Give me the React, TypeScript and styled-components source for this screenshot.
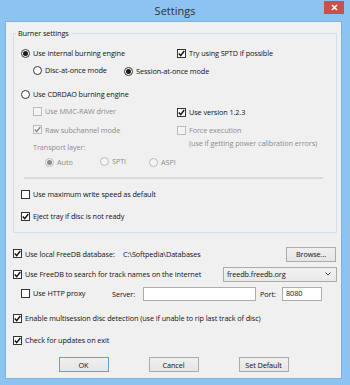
import React from "react";
import styled, { createGlobalStyle } from "styled-components";

const GlobalStyle = createGlobalStyle`
  html, body {
    margin: 0;
    padding: 0;
    background: #8cc3f1;
  }
  body {
    font-family: "Open Sans", "Noto Sans", "Liberation Sans", sans-serif;
  }
`;

const Window = styled.div`
  width: 350px;
  height: 385px;
  background: #8cc3f1;
  display: flex;
  flex-direction: column;
  overflow: hidden;
`;

const TitleBar = styled.div`
  height: 21px;
  flex: none;
  display: grid;
  grid-template-columns: 1fr auto 1fr;
  align-items: center;
`;

const Title = styled.div`
  grid-column: 2;
  font-size: 11px;
  color: #303030;
`;

const CloseButton = styled.div`
  grid-column: 3;
  justify-self: end;
  align-self: start;
  margin: 1px 6px 0 0;
  width: 20px;
  height: 13px;
  background: #c75050;
  display: flex;
  align-items: center;
  justify-content: center;
`;

const Client = styled.div`
  flex: 1;
  margin: 0 8px 6px 5px;
  background: #f0f0f0;
  border: 1px solid #7fb3df;
  padding: 5px 4px 0 7px;
  font-size: 7.3px;
  letter-spacing: -0.1px;
  line-height: 12px;
  color: #111;
`;

const GroupBox = styled.fieldset`
  margin: 0;
  min-width: 0;
  border: 1px solid #d5dfe5;
  padding: 8px 0 10px 7px;
`;

const Legend = styled.legend`
  padding: 0 2px;
  margin-left: -5px;
  line-height: 12px;
`;

const Row = styled.div<{ $mt?: number; $indent?: number; $h?: number; $top?: boolean }>`
  display: flex;
  align-items: ${(p) => (p.$top ? "flex-start" : "center")};
  height: ${(p) => p.$h ?? 12}px;
  margin-top: ${(p) => p.$mt ?? 0}px;
  padding-left: ${(p) => p.$indent ?? 0}px;
  white-space: nowrap;
`;

const Cell = styled.div<{ $w?: number; $mt?: number; $ml?: number }>`
  flex: none;
  width: ${(p) => (p.$w ? `${p.$w}px` : "auto")};
  margin-top: ${(p) => p.$mt ?? 0}px;
  margin-left: ${(p) => p.$ml ?? 0}px;
`;

const Label = styled.span<{ $disabled?: boolean }>`
  display: inline-flex;
  align-items: center;
  gap: 3px;
  color: ${(p) => (p.$disabled ? "#8d8d8d" : "#111")};
`;

const Box = styled.span<{ $disabled?: boolean; $round?: boolean }>`
  width: 9px;
  height: 9px;
  box-sizing: border-box;
  flex: none;
  border: 1px solid ${(p) => (p.$disabled ? "#bcbcbc" : "#333")};
  background: ${(p) => (p.$disabled ? "#f4f4f4" : "#fff")};
  border-radius: ${(p) => (p.$round ? "50%" : "0")};
  display: flex;
  align-items: center;
  justify-content: center;
`;

const Dot = styled.span<{ $disabled?: boolean }>`
  width: 5px;
  height: 5px;
  border-radius: 50%;
  background: ${(p) => (p.$disabled ? "#8a8a8a" : "#1a1a1a")};
`;

const Muted = styled.span`
  color: #8d8d8d;
`;

const Separator = styled.div`
  height: 2px;
  margin: 9px 13px 0 3px;
  background: #dadada;
`;

const TextInput = styled.div<{ $w: number }>`
  width: ${(p) => p.$w}px;
  height: 14px;
  box-sizing: border-box;
  background: #fff;
  border: 1px solid #abadb3;
  padding: 0 3px;
  line-height: 10px;
  flex: none;
`;

const Combo = styled.div`
  margin-left: auto;
  width: 114px;
  height: 15px;
  box-sizing: border-box;
  border: 1px solid #acacac;
  background: linear-gradient(#f2f2f2, #e8e8e8);
  display: flex;
  align-items: center;
  justify-content: space-between;
  padding: 0 5px 0 3px;
`;

const ButtonRow = styled.div`
  display: flex;
  justify-content: center;
  gap: 40px;
  margin-top: 11px;
  padding-right: 3px;
`;

const Button = styled.div<{ $default?: boolean; $push?: boolean }>`
  width: 50px;
  height: 15px;
  box-sizing: border-box;
  border: 1px solid ${(p) => (p.$default ? "#5aa2e0" : "#acacac")};
  background: linear-gradient(#f0f0f0, #e5e5e5);
  display: flex;
  align-items: center;
  justify-content: center;
  flex: none;
  margin-left: ${(p) => (p.$push ? "auto" : "0")};
  margin-right: ${(p) => (p.$push ? "1px" : "0")};
`;

const Check = ({ checked, disabled }: { checked?: boolean; disabled?: boolean }) => (
  <Box $disabled={disabled}>
    {checked && (
      <svg width="7" height="7" viewBox="0 0 7 7">
        <path
          d="M0.8 3.6 L2.7 5.6 L6.3 1"
          fill="none"
          stroke={disabled ? "#8a8a8a" : "#111"}
          strokeWidth="1.4"
        />
      </svg>
    )}
  </Box>
);

const Option = ({
  text,
  radio,
  checked,
  disabled,
}: {
  text: string;
  radio?: boolean;
  checked?: boolean;
  disabled?: boolean;
}) => (
  <Label $disabled={disabled}>
    {radio ? (
      <Box $round $disabled={disabled}>
        {checked && <Dot $disabled={disabled} />}
      </Box>
    ) : (
      <Check checked={checked} disabled={disabled} />
    )}
    {text}
  </Label>
);

export default function App() {
  return (
    <>
      <GlobalStyle />
      <Window>
        <TitleBar>
          <Title>Settings</Title>
          <CloseButton>
            <svg width="7" height="7" viewBox="0 0 7 7">
              <path d="M1 1 L6 6 M6 1 L1 6" stroke="#fff" strokeWidth="1.6" />
            </svg>
          </CloseButton>
        </TitleBar>
        <Client>
          <GroupBox>
            <Legend>Burner settings</Legend>
            <Row>
              <Cell $w={156}>
                <Option radio checked text="Use internal burning engine" />
              </Cell>
              <Option checked text="Try using SPTD if possible" />
            </Row>
            <Row $mt={6} $indent={12}>
              <Cell $w={91}>
                <Option radio text="Disc-at-once mode" />
              </Cell>
              <Option radio checked text="Session-at-once mode" />
            </Row>
            <Row $mt={11}>
              <Option radio text="Use CDRDAO burning engine" />
            </Row>
            <Row $mt={6} $indent={12}>
              <Cell $w={144}>
                <Option disabled text="Use MMC-RAW driver" />
              </Cell>
              <Option checked text="Use version 1.2.3" />
            </Row>
            <Row $mt={6} $indent={12}>
              <Cell $w={144}>
                <Option disabled checked text="Raw subchannel mode" />
              </Cell>
              <Option disabled text="Force execution" />
            </Row>
            <Row $mt={1} $indent={12} $h={16} $top>
              <Cell $w={156} $mt={4}>
                <Muted>Transport layer:</Muted>
              </Cell>
              <Muted>(use if getting power calibration errors)</Muted>
            </Row>
            <Row $mt={3} $indent={24}>
              <Cell $w={55}>
                <Option radio checked disabled text="Auto" />
              </Cell>
              <Cell $w={49}>
                <Option radio disabled text="SPTI" />
              </Cell>
              <Option radio disabled text="ASPI" />
            </Row>
            <Separator />
            <Row $mt={9}>
              <Option text="Use maximum write speed as default" />
            </Row>
            <Row $mt={10}>
              <Option checked text="Eject tray if disc is not ready" />
            </Row>
          </GroupBox>

          <Row $mt={13} $h={16}>
            <Cell $w={110}>
              <Option checked text="Use local FreeDB database:" />
            </Cell>
            <Cell>{"C:\\Softpedia\\Databases"}</Cell>
            <Button $push>Browse...</Button>
          </Row>
          <Row $mt={4} $h={16}>
            <Option checked text="Use FreeDB to search for track names on the internet" />
            <Combo>
              <span>freedb.freedb.org</span>
              <svg width="6" height="4" viewBox="0 0 6 4">
                <path d="M0.5 0.5 L3 3 L5.5 0.5" fill="none" stroke="#444" strokeWidth="1" />
              </svg>
            </Combo>
          </Row>
          <Row $mt={4} $h={16} $indent={8}>
            <Cell $w={91}>
              <Option text="Use HTTP proxy" />
            </Cell>
            <Cell $w={31}>Server:</Cell>
            <TextInput $w={113} />
            <Cell $w={22} $ml={4}>
              Port:
            </Cell>
            <TextInput $w={40}>8080</TextInput>
          </Row>
          <Row $mt={10}>
            <Option
              checked
              text="Enable multisession disc detection (use if unable to rip last track of disc)"
            />
          </Row>
          <Row $mt={10}>
            <Option checked text="Check for updates on exit" />
          </Row>
          <ButtonRow>
            <Button $default>OK</Button>
            <Button>Cancel</Button>
            <Button>Set Default</Button>
          </ButtonRow>
        </Client>
      </Window>
    </>
  );
}
